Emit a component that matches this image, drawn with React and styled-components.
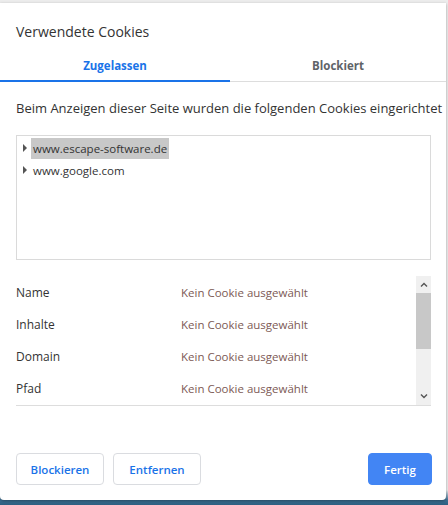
import React from 'react';
import styled, { createGlobalStyle } from 'styled-components';

const GlobalStyle = createGlobalStyle`
    html, body {
        margin: 0;
        padding: 0;
    }
    body {
        width: 448px;
        height: 505px;
        overflow: hidden;
        background: linear-gradient(to bottom, #ececec 0, #ececec 490px, #3b6f93 500px, #2d5f80 505px);
        font-family: "Segoe UI", "Open Sans", "Noto Sans", sans-serif;
        color: #333;
    }
`;

const Page = styled.div`
    padding-top: 3px;
`;

const Dialog = styled.div`
    width: 446px;
    height: 497px;
    background: #fff;
    border-radius: 0 0 4px 4px;
    box-shadow: 0 1px 3px rgba(0, 0, 0, 0.35);
    display: flex;
    flex-direction: column;
    box-sizing: border-box;
`;

const Title = styled.h1`
    margin: 0;
    padding: 19px 16px 0;
    height: 40px;
    box-sizing: border-box;
    font-size: 14px;
    font-weight: 400;
    color: #333;
`;

const Tabs = styled.div`
    display: flex;
    height: 38px;
    border-bottom: 1px solid #ddd;
`;

const Tab = styled.div`
    flex: ${p => (p.active ? '0 0 230px' : '1')};
    display: flex;
    align-items: center;
    justify-content: center;
    font-size: 11.5px;
    font-weight: 700;
    color: ${p => (p.active ? '#1a73e8' : '#5f6368')};
    border-bottom: 2px solid ${p => (p.active ? '#1a73e8' : 'transparent')};
    margin-bottom: -1px;
    padding-top: 7px;
    box-sizing: border-box;
`;

const Body = styled.div`
    padding: 0 15px 0 16px;
    flex: 1;
    display: flex;
    flex-direction: column;
`;

const Description = styled.p`
    margin: 17px 0 0;
    font-size: 13px;
    line-height: 18px;
    white-space: nowrap;
    color: #333;
`;

const TreeBox = styled.div`
    margin-top: 18px;
    height: 125px;
    border: 1px solid #dadada;
    box-sizing: border-box;
    padding: 1px 0 0 4px;
`;

const TreeRow = styled.div`
    display: flex;
    align-items: center;
    height: 22px;
    font-size: 11.5px;
    color: #333;
`;

const Arrow = styled.span`
    width: 0;
    height: 0;
    border-top: 4px solid transparent;
    border-bottom: 4px solid transparent;
    border-left: 4px solid #555;
    margin: 0 4px 0 2px;
`;

const Host = styled.span`
    padding: 0 2px;
    line-height: 21px;
    background: ${p => (p.selected ? '#c8c8c8' : 'transparent')};
`;

const Details = styled.div`
    margin-top: 16px;
    height: 130px;
    display: flex;
    border-bottom: 1px solid #ddd;
    box-sizing: border-box;
`;

const DetailList = styled.div`
    flex: 1;
    display: flex;
    flex-direction: column;
`;

const DetailRow = styled.div`
    display: flex;
    align-items: center;
    height: 32px;
    font-size: 12px;
`;

const Label = styled.span`
    width: 165px;
    color: #333;
`;

const Value = styled.span`
    color: #7d5a55;
    font-size: 11.5px;
`;

const Scrollbar = styled.div`
    width: 15px;
    background: #f0f0f0;
    display: flex;
    flex-direction: column;
    align-items: center;
`;

const ScrollArrow = styled.div`
    height: 17px;
    display: flex;
    align-items: center;
    justify-content: center;
`;

const Thumb = styled.div`
    width: 15px;
    height: 56px;
    background: #c8c8c8;
`;

const Spacer = styled.div`
    flex: 1;
`;

const Footer = styled.div`
    display: flex;
    align-items: center;
    padding: 0 14px 15px 16px;
    gap: 9px;
`;

const Button = styled.button`
    height: 32px;
    padding: 0;
    border-radius: 4px;
    font-family: inherit;
    font-size: 11.5px;
    font-weight: 600;
    border: 1px solid ${p => (p.primary ? '#4285f4' : '#dadce0')};
    background: ${p => (p.primary ? '#4285f4' : '#fff')};
    color: ${p => (p.primary ? '#fff' : '#1a73e8')};
    margin-left: ${p => (p.primary ? 'auto' : '0')};
    width: ${p => (p.primary ? '64px' : '88px')};
`;

const Chevron = ({ up }) => (
    <svg width="8" height="5" viewBox="0 0 8 5">
        <path d={up ? 'M1 4.5 L4 1.5 L7 4.5' : 'M1 0.5 L4 3.5 L7 0.5'} fill="none" stroke="#555" strokeWidth="1.4" />
    </svg>
);

const rows = ['Name', 'Inhalte', 'Domain', 'Pfad'];

const App = () => (
    <Page>
        <GlobalStyle />
        <Dialog>
            <Title>Verwendete Cookies</Title>
            <Tabs>
                <Tab active>Zugelassen</Tab>
                <Tab>Blockiert</Tab>
            </Tabs>
            <Body>
                <Description>Beim Anzeigen dieser Seite wurden die folgenden Cookies eingerichtet</Description>
                <TreeBox>
                    <TreeRow>
                        <Arrow />
                        <Host selected>www.escape-software.de</Host>
                    </TreeRow>
                    <TreeRow>
                        <Arrow />
                        <Host>www.google.com</Host>
                    </TreeRow>
                </TreeBox>
                <Details>
                    <DetailList>
                        {rows.map(r => (
                            <DetailRow key={r}>
                                <Label>{r}</Label>
                                <Value>Kein Cookie ausgewählt</Value>
                            </DetailRow>
                        ))}
                    </DetailList>
                    <Scrollbar>
                        <ScrollArrow><Chevron up /></ScrollArrow>
                        <Thumb />
                        <Spacer />
                        <ScrollArrow><Chevron /></ScrollArrow>
                    </Scrollbar>
                </Details>
                <Spacer />
            </Body>
            <Footer>
                <Button>Blockieren</Button>
                <Button>Entfernen</Button>
                <Button primary>Fertig</Button>
            </Footer>
        </Dialog>
    </Page>
);

export default App;
